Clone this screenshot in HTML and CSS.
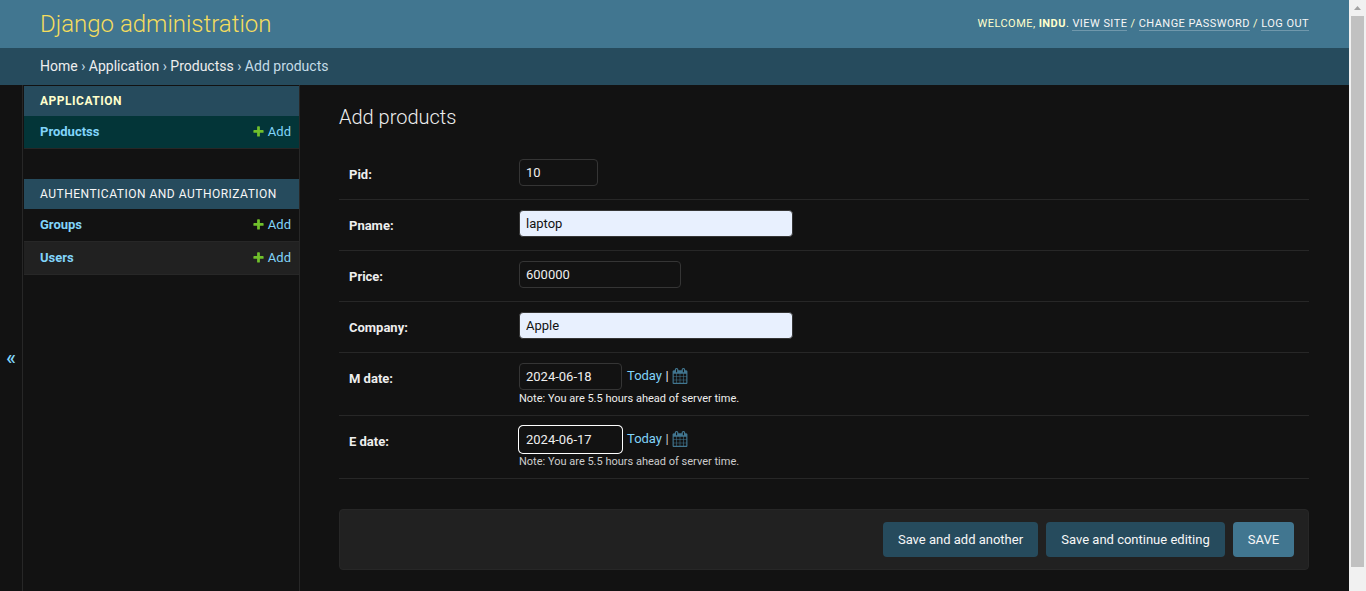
FILE: index.html
```html
<!DOCTYPE html>
<html lang="en">
<head>
<meta charset="utf-8">
<title>Add products | Django site admin</title>
<link rel="stylesheet" href="styles.css">
</head>
<body>
<svg class="defs" aria-hidden="true">
  <symbol id="plus" viewBox="0 0 1792 1792"><path d="M1600 796v192q0 40-28 68t-68 28h-416v416q0 40-28 68t-68 28h-192q-40 0-68-28t-28-68v-416h-416q-40 0-68-28t-28-68v-192q0-40 28-68t68-28h416v-416q0-40 28-68t68-28h192q40 0 68 28t28 68v416h416q40 0 68 28t28 68z"/></symbol>
  <symbol id="calendar" viewBox="0 0 1792 1792"><path d="M192 1664h288v-288h-288v288zm352 0h320v-288h-320v288zm-352-352h288v-320h-288v320zm352 0h320v-320h-320v320zm-352-384h288v-288h-288v288zm736 736h320v-288h-320v288zm-384-736h320v-288h-320v288zm768 736h288v-288h-288v288zm-384-352h320v-320h-320v320zm-352-864v-288q0-13-9.500-22.500t-22.500-9.500h-64q-13 0-22.500 9.500t-9.500 22.500v288q0 13 9.500 22.500t22.500 9.500h64q13 0 22.500-9.500t9.500-22.500zm736 864h288v-320h-288v320zm-384-384h320v-288h-320v288zm384 0h288v-288h-288v288zm32-480v-288q0-13-9.500-22.500t-22.500-9.500h-64q-13 0-22.500 9.500t-9.500 22.500v288q0 13 9.500 22.500t22.500 9.500h64q13 0 22.500-9.500t9.500-22.500zm384-64v1280q0 52-38 90t-90 38h-1408q-52 0-90-38t-38-90v-1280q0-52 38-90t90-38h128v-96q0-66 47-113t113-47h64q66 0 113 47t47 113v96h384v-96q0-66 47-113t113-47h64q66 0 113 47t47 113v96h128q52 0 90 38t38 90z"/></symbol>
</svg>
<div class="window">
  <div class="page">
    <header class="header">
      <div class="brand">Django administration</div>
      <div class="user-tools">Welcome, <strong>Indu</strong>. <a href="#">View site</a> / <a href="#">Change password</a> / <a href="#">Log out</a></div>
    </header>
    <nav class="breadcrumbs"><a href="#">Home</a> › <a href="#">Application</a> › <a href="#">Productss</a> › Add products</nav>
    <div class="main">
      <button class="toggle">«</button>
      <aside class="sidebar">
        <section class="module current-app">
          <h2>Application</h2>
          <div class="model current"><a class="name" href="#">Productss</a><a class="add" href="#"><svg><use href="#plus"/></svg>Add</a></div>
        </section>
        <section class="module">
          <h2>Authentication and Authorization</h2>
          <div class="model"><a class="name" href="#">Groups</a><a class="add" href="#"><svg><use href="#plus"/></svg>Add</a></div>
          <div class="model even"><a class="name" href="#">Users</a><a class="add" href="#"><svg><use href="#plus"/></svg>Add</a></div>
        </section>
      </aside>
      <main class="content">
        <h1>Add products</h1>
        <form>
          <div class="row"><label for="pid">Pid:</label><input id="pid" class="int" type="text" value="10"></div>
          <div class="row"><label for="pname">Pname:</label><input id="pname" class="text filled" type="text" value="laptop"></div>
          <div class="row"><label for="price">Price:</label><input id="price" class="bigint" type="text" value="600000"></div>
          <div class="row"><label for="company">Company:</label><input id="company" class="text filled" type="text" value="Apple"></div>
          <div class="row date-row"><label for="mdate">M date:</label>
            <div><div class="date-line"><input id="mdate" class="date" type="text" value="2024-06-18"><span class="shortcuts"><a href="#">Today</a> | <svg><use href="#calendar"/></svg></span></div>
            <div class="note">Note: You are 5.5 hours ahead of server time.</div></div>
          </div>
          <div class="row date-row"><label for="edate">E date:</label>
            <div><div class="date-line"><input id="edate" class="date focused" type="text" value="2024-06-17"><span class="shortcuts dim"><a href="#">Today</a> | <svg><use href="#calendar"/></svg></span></div>
            <div class="note dim">Note: You are 5.5 hours ahead of server time.</div></div>
          </div>
          <div class="submit-row">
            <button type="button" class="btn another">Save and add another</button>
            <button type="button" class="btn continue">Save and continue editing</button>
            <button type="button" class="btn save">SAVE</button>
          </div>
        </form>
      </main>
    </div>
  </div>
  <div class="scrollbar"><div class="arrow"></div><div class="thumb"></div></div>
</div>
</body>
</html>
```
FILE: styles.css
```css
* { box-sizing: border-box; }
body { margin: 0; background: #121212; color: #eee; font: 13px/17px Roboto, sans-serif; overflow: hidden; }
a { color: #81d4fa; text-decoration: none; }
.defs { display: none; }
.window { display: flex; height: 591px; }
.page { flex: 1; display: flex; flex-direction: column; }

.header { height: 48px; padding: 0 40px; background: #417690; display: flex; justify-content: space-between; align-items: center; }
.brand { color: #f5dd5d; font-size: 24px; font-weight: 300; line-height: 28px; }
.user-tools { color: #ffc; font-size: 11px; font-weight: 400; letter-spacing: .45px; text-transform: uppercase; line-height: 14px; margin-top: -1px; }
.user-tools a { color: #f7f7f7; border-bottom: 1px solid rgba(255, 255, 255, .25); }
.breadcrumbs { height: 37px; padding: 10px 40px 0; background: #264b5d; color: #c4dce8; font-size: 14px; line-height: 17px; }
.breadcrumbs a { color: #eee; }

.main { flex: 1; display: flex; min-height: 0; }
.toggle { width: 23px; padding: 37px 0 0; border: 0; border-right: 1px solid #272727; background: #121212; color: #81d4fa; font: 500 20px/20px Roboto, sans-serif; }
.sidebar { width: 277px; padding: 1px 0 0 1px; border-right: 1px solid #272727; }
.module { margin-bottom: 30px; }
.module h2 { height: 30px; margin: 0; padding: 0 16px; background: #264b5d; color: #f7f7f7; font-size: 12px; line-height: 30px; font-weight: 400; letter-spacing: .5px; text-transform: uppercase; }
.current-app h2 { color: #ffc; font-weight: 700; }
.model { height: 33px; padding: 0 8px 2px 16px; border-bottom: 1px solid #272727; display: flex; align-items: center; justify-content: space-between; }
.model.current { background: #033538; }
.model.even { background: #212121; }
.name { font-weight: 700; }
.add { display: flex; align-items: center; gap: 3px; }
.add svg { width: 13px; height: 13px; fill: #70bf2b; }

.content { flex: 1; padding: 20px 40px 0 39px; }
h1 { margin: 0 0 20px; font-size: 20px; line-height: 24px; font-weight: 300; }
.row { height: 51px; padding: 10px 10px 0; border-bottom: 1px solid #272727; display: flex; align-items: flex-start; }
.date-row { height: 63px; }
.row label { width: 170px; padding-top: 7px; font-weight: 700; }
.row input { height: 27px; padding: 5px 6px; border: 1px solid #353535; border-radius: 4px; background: #121212; color: #eee; font: 13px/15px Roboto, sans-serif; outline: none; }
.row .int { width: 79px; }
.row .bigint { width: 162px; }
.row .text { width: 274px; }
.row .filled { background: #e8f0fe; color: #121212; }
.row .date { width: 103px; }
.row .focused { border-color: #121212; box-shadow: 0 0 0 1px #fff; }
.date-line { display: flex; gap: 5px; }
.shortcuts { display: flex; gap: 3.5px; height: 25px; align-items: center; white-space: nowrap; }
.shortcuts svg { width: 16px; height: 16px; fill: #417690; }
.dim { color: #ccc; }
.note { margin-top: 2px; font-size: 11px; line-height: 13px; }

.submit-row { height: 61px; margin-top: 30px; padding: 0 14px; background: #212121; border: 1px solid #272727; border-radius: 4px; display: flex; gap: 8px; align-items: center; justify-content: flex-end; }
.btn { height: 35px; padding: 0; border: 0; border-radius: 4px; background: #264b5d; color: #f7f7f7; font: 400 13px/15px Roboto, sans-serif; }
.another { width: 155px; }
.continue { width: 179px; }
.save { width: 61px; background: #417690; }

.scrollbar { width: 17px; padding: 6px 2px 0; background: #f1f1f1; }
.arrow { width: 7px; height: 4px; margin: 0 auto 6px; background: #a3a3a3; clip-path: polygon(50% 0, 100% 100%, 0 100%); }
.thumb { height: 551px; background: #c1c1c1; }
```
